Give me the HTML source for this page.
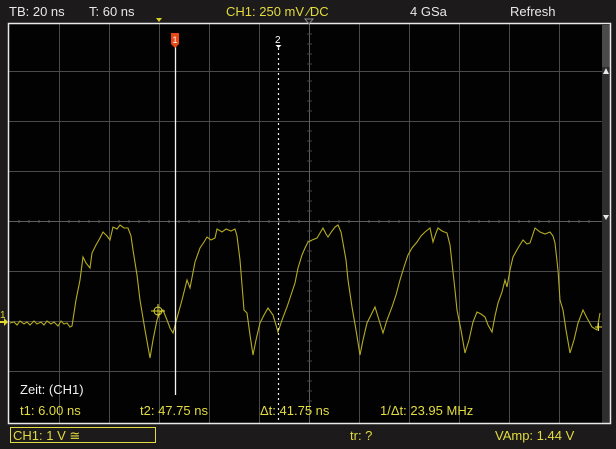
<!DOCTYPE html>
<html><head><meta charset="utf-8"><style>
html,body{margin:0;padding:0;background:#1c1a1a;width:616px;height:449px;overflow:hidden}
svg{display:block}
text{font-family:"Liberation Sans",sans-serif;font-size:13px}
</style></head><body>
<svg width="616" height="449" viewBox="0 0 616 449" xmlns="http://www.w3.org/2000/svg">
<rect width="616" height="449" fill="#1c1a1a"/>
<rect x="9" y="24" width="601" height="399" fill="#020202"/>
<g stroke="#4a4a4a" stroke-width="1">
<path d="M59.5 24V423M109.5 24V423M159.5 24V423M209.5 24V423M259.5 24V423M359.5 24V423M409.5 24V423M459.5 24V423M509.5 24V423M559.5 24V423"/>
<path d="M9 71.5H602M9 121.5H602M9 171.5H602M9 271.5H602M9 321.5H602M9 371.5H602"/>
<path d="M309.5 24V423M9 221.5H602" stroke="#5e5e5e"/>
<path d="M19 220V223M29 220V223M39 220V223M49 220V223M69 220V223M79 220V223M89 220V223M99 220V223M119 220V223M129 220V223M139 220V223M149 220V223M169 220V223M179 220V223M189 220V223M199 220V223M219 220V223M229 220V223M239 220V223M249 220V223M269 220V223M279 220V223M289 220V223M299 220V223M319 220V223M329 220V223M339 220V223M349 220V223M369 220V223M379 220V223M389 220V223M399 220V223M419 220V223M429 220V223M439 220V223M449 220V223M469 220V223M479 220V223M489 220V223M499 220V223M519 220V223M529 220V223M539 220V223M549 220V223M569 220V223M579 220V223M589 220V223" stroke="#5e5e5e"/>
<path d="M307 34H312M307 44H312M307 54H312M307 64H312M307 81H312M307 91H312M307 101H312M307 111H312M307 131H312M307 141H312M307 151H312M307 161H312M307 181H312M307 191H312M307 201H312M307 211H312M307 231H312M307 241H312M307 251H312M307 261H312M307 281H312M307 291H312M307 301H312M307 311H312M307 331H312M307 341H312M307 351H312M307 361H312M307 381H312M307 391H312M307 401H312M307 411H312" stroke="#444"/>
</g>
<rect x="602" y="25" width="8" height="398" fill="#2e2e2e"/>
<rect x="602" y="25" width="8" height="42" fill="#4a4a4a"/>
<rect x="8.5" y="23.5" width="602" height="400" fill="none" stroke="#e8e8e8" stroke-width="1.5"/>
<polyline fill="none" stroke="#b4ac22" stroke-width="1.1" points="10,323 14,322 17,325 20,321 24,324 27,322 30,325 34,321 37,324 41,322 44,325 47,321 51,324 54,322 58,326 61,321 64,324 67,323 70,327 72,326 76,300 80,280 83,257 86,263 90,268 92,253 96,245 100,238 103,232 107,236 110,240 113,227 117,229 120,225 124,228 128,228 131,236 133,250 137,275 140,300 145,330 150,358 153,340 157,320 160,312 163,310 167,320 170,328 173,333 177,318 182,300 187,280 190,288 195,262 200,248 204,242 207,237 211,240 215,238 217,229 222,232 226,229 231,231 235,229 237,236 240,260 244,310 247,313 250,335 253,355 256,340 260,323 264,315 268,308 273,315 278,332 282,320 287,307 291,295 295,283 298,268 302,255 305,248 308,242 312,240 317,238 320,233 323,228 326,234 328,237 332,231 335,227 338,225 341,232 343,243 346,260 348,280 352,307 356,330 360,355 363,340 367,323 371,315 375,307 379,320 383,333 387,320 392,307 396,295 400,280 404,267 408,255 412,248 417,242 421,236 425,232 430,228 433,242 436,233 438,228 442,231 447,233 450,245 452,263 455,290 457,310 461,330 465,353 469,340 473,322 477,312 481,314 485,317 488,325 492,332 495,316 498,303 502,292 505,280 507,287 510,270 513,257 518,248 523,240 527,244 530,243 533,234 535,228 540,232 545,234 550,232 553,236 555,243 558,270 560,300 563,310 566,330 570,353 574,340 578,323 583,310 587,318 592,327 597,330 600,313"/>
<g stroke="#e0d830" fill="none" stroke-width="1"><circle cx="158" cy="311" r="4"/><path d="M151 311H165M158 304V318"/></g>
<path d="M595 327H602M598.5 323V331" stroke="#e0d830"/>
<line x1="175.5" y1="46" x2="175.5" y2="395" stroke="#f4f4f4" stroke-width="1.3"/>
<path d="M171 33H179V44L175 48L171 44Z" fill="#e84818"/>
<text x="172.5" y="43" fill="#fff" style="font-size:9px">1</text>
<line x1="278.5" y1="48" x2="278.5" y2="423" stroke="#f0f0f0" stroke-width="1.2" stroke-dasharray="2,3"/>
<text x="275" y="43" fill="#fff" style="font-size:10px">2</text>
<path d="M275.5 45H281.5L278.5 48Z" fill="#fff"/>
<path d="M156 18H162L159 22Z" fill="#d8d020"/>
<path d="M305 19H313L309 24Z" fill="none" stroke="#909090"/>
<path d="M603 74H609L606 68Z" fill="#e8e8e8"/>
<path d="M603 215H609L606 220Z" fill="#e8e8e8"/>
<path d="M0 321H4V318L8 322L4 326V323H0Z" fill="#e0d830"/>
<text x="0" y="318" fill="#e0d830" style="font-size:10px">1</text>
<text x="9" y="16" fill="#e8e8e8">TB: 20 ns</text>
<text x="89" y="16" fill="#e8e8e8">T: 60 ns</text>
<text x="226" y="16" fill="#e2dc40">CH1: 250 mV ⁄DC</text>
<text x="410" y="16" fill="#e8e8e8">4 GSa</text>
<text x="510" y="16" fill="#e8e8e8">Refresh</text>
<text x="20" y="394" fill="#f0f0f0">Zeit: (CH1)</text>
<text x="20" y="415" fill="#e2dc40">t1: 6.00 ns</text>
<text x="140" y="415" fill="#e2dc40">t2: 47.75 ns</text>
<text x="260" y="415" fill="#e2dc40">Δt: 41.75 ns</text>
<text x="380" y="415" fill="#e2dc40">1/Δt: 23.95 MHz</text>
<rect x="10.5" y="427.5" width="145" height="15" fill="none" stroke="#e2dc40"/>
<text x="13" y="440" fill="#e2dc40">CH1: 1 V ≅</text>
<text x="350" y="440" fill="#e2dc40">tr: ?</text>
<text x="495" y="440" fill="#e2dc40">VAmp: 1.44 V</text>
</svg>
</body></html>
